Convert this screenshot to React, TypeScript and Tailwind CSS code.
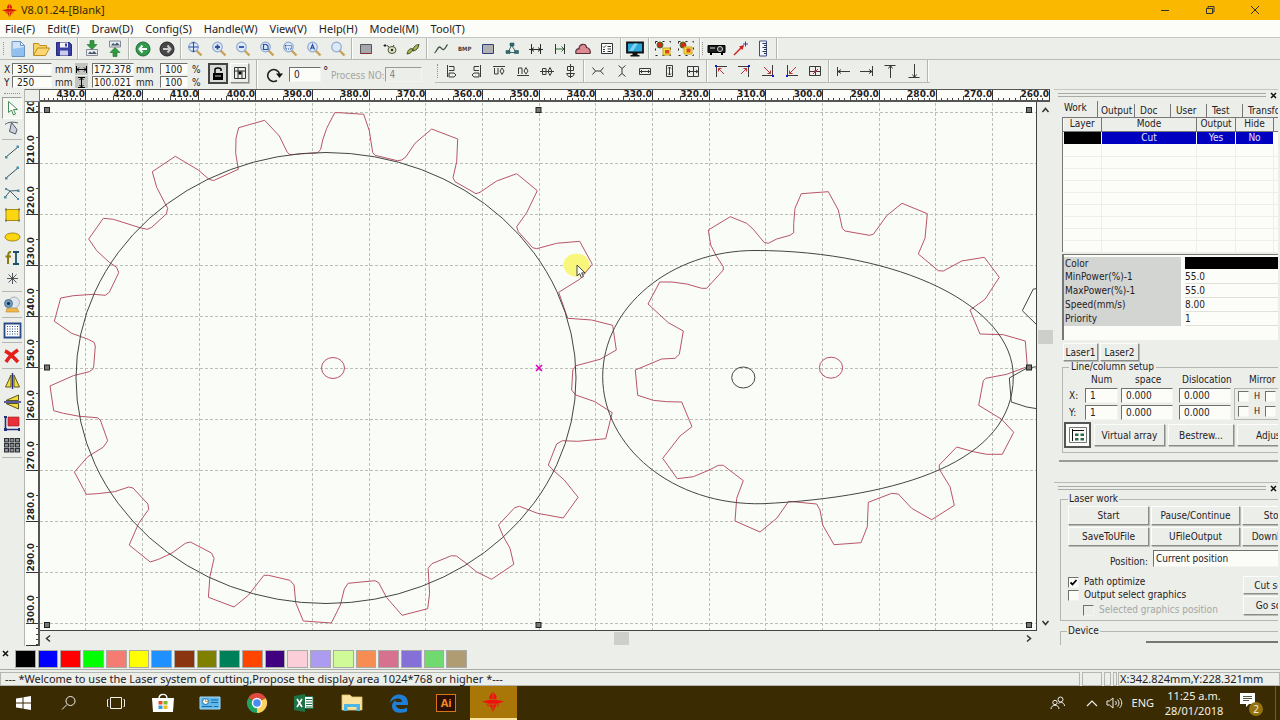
import React, { type ReactNode } from "react";

type Pt = [number, number];

/* ---------- drawing data, in document units ---------- */

const GEAR_LARGE: Pt[] = [
  [334.7, 112.7], [326.7, 128.3], [322.7, 140], [320.7, 149.3], [317.7, 152.7], [290, 154.7], [287.3, 152.3], [279.3, 136],
  [264.7, 120.3], [238.7, 127.7], [236, 138.3], [235.7, 153.3], [238.3, 169.3], [213.3, 180.7], [208.3, 178.7], [198.3, 170],
  [175.3, 156.3], [152.3, 171.7], [156.7, 187.3], [165.3, 204], [167.7, 208.3], [166.3, 214], [151.7, 227.3], [147.3, 229.3],
  [140, 227.7], [113.3, 219.3], [103.3, 218.3], [88.7, 239], [96.7, 250.7], [109.3, 262.3], [116.7, 267.3], [118.7, 272.7],
  [109.3, 292.3], [105.3, 295.3], [93.3, 294.3], [73.3, 295.7], [60.7, 298], [54.3, 321.3], [71.7, 333.3], [88.3, 339.3],
  [94, 342.3], [95.3, 346], [93.7, 366.7], [92.7, 369.3], [89.3, 371.7], [73.3, 375.7], [50, 386], [53.7, 410.7], [63.3, 413.3],
  [79.3, 416.3], [97.3, 417.7], [100.3, 420], [107.7, 440.7], [103.1, 447.3], [87.8, 456.7], [74.4, 472], [86.3, 494.3],
  [97.4, 493.7], [114.6, 491.7], [128.8, 487], [133, 488], [147.9, 504], [148.7, 509.3], [138.7, 523.3], [129.2, 545],
  [150.2, 562], [158.6, 559.3], [172, 553], [185.4, 543.3], [190.4, 542], [211.5, 553], [214.1, 558.3], [209.9, 576.7],
  [208.4, 597.3], [234, 607], [248.6, 595], [258.1, 582.7], [263.9, 575.3], [268.5, 575.3], [289.9, 580.3], [294.1, 585],
  [295.7, 602.7], [303.3, 621], [331.3, 623], [340.4, 605], [344.3, 589], [348.1, 583.3], [374.9, 580.7], [378.7, 582.7],
  [386.4, 597.3], [402.1, 615.3], [427.7, 608.7], [429.6, 593.3], [428.1, 568.3], [431.9, 563.7], [451.4, 555.7], [456.4, 556],
  [464.9, 562.3], [476.3, 571.7], [491.6, 579.3], [513.8, 564.3], [510, 548.3], [503.1, 536], [498.5, 525], [514.6, 507.7],
  [519.5, 506.3], [537.5, 513.3], [563.2, 518], [578.1, 497.3], [564.3, 480], [554, 471], [548.3, 465], [556.6, 444],
  [562.4, 440.7], [577.7, 441.3], [605.7, 438.7], [612.2, 412.7], [594.9, 401.7], [575.8, 395], [571.6, 390], [572.8, 370],
  [576, 365.7], [600, 359.3], [616.3, 350], [612.7, 325.3], [591.7, 320], [567.7, 318.3], [558.7, 292.3], [580, 279],
  [592.3, 264.3], [579.7, 241.3], [556.7, 243.3], [536.7, 248.7], [532.7, 247.7], [518.3, 231.7], [516.7, 226.7],
  [526.7, 212.7], [537.3, 190.7], [516.7, 173.7], [496.7, 181], [480, 192.3], [476, 193.7], [455, 181.7], [453, 177.7],
  [456.7, 161.7], [457.7, 139], [431.7, 129], [415, 143.3], [406, 156.7], [401.7, 160], [397.3, 160.7], [375, 155.3],
  [372.7, 152.7], [369.3, 130.7], [363.7, 114.3], [340, 112.7],
];

const GEAR_SMALL: Pt[] = [
  [801.3, 193.7], [795, 208.3], [793.7, 223.3], [793.7, 232.7], [790, 235.3], [776.7, 239], [768.3, 243.3], [764, 242.3],
  [753.3, 229.3], [746.7, 223.3], [730.3, 216.7], [708.3, 230], [710.7, 245], [716.7, 256.7], [723.3, 266.7], [723.3, 270],
  [706.7, 288.3], [701.7, 288.3], [686.7, 284], [672, 282], [659.7, 282], [648, 304], [668.3, 322.7], [683.3, 331],
  [679.3, 354.3], [675, 358.3], [661.7, 359], [635.3, 370], [637.7, 395.3], [653.3, 400.3], [666.7, 401.7], [681.7, 402],
  [692, 426.7], [680, 436], [662.7, 458.3], [677.3, 478.7], [693.3, 476.7], [710, 469.7], [718.3, 465.3], [723.3, 465.3],
  [743.3, 480.7], [736.7, 498.3], [735, 521], [760, 532], [776.7, 518.3], [788.7, 501.3], [816.7, 504], [820, 510],
  [822.7, 525], [834, 544.7], [861, 542.7], [867.3, 526.7], [868.3, 502.3], [891.7, 493.3], [898.3, 494], [911.7, 508.3],
  [931.7, 519.7], [954.3, 505.3], [950, 486.7], [939.3, 469.3], [939.3, 465], [956.7, 447], [973.3, 451.7], [986.7, 454.3],
  [1002.3, 454.3], [1013.7, 432.3], [1001.7, 419.3], [978.7, 405.3], [983.3, 380.7], [985.7, 378.3], [1006.7, 374.3],
  [1027.3, 366.7], [1025.3, 341], [1003.3, 334.7], [980, 334], [970, 310], [985, 299.3], [999.3, 277.3], [984.3, 257.3],
  [961.7, 261], [943.3, 271], [938.3, 270.7], [918.3, 254], [925, 238.3], [927.3, 213.7], [902, 203.3], [886.7, 215.7],
  [873.3, 234.3], [869.3, 235.3], [845, 231], [842.3, 228.3], [838.3, 210], [828.3, 191.7],
];

const EGG =
  "M755 250.5C900 250.5 1013.3 306 1013.3 376.7C1013.3 462 900 497 763 503.7C672 506 602.7 446 602.7 376.7C602.7 307 671 250.5 755 250.5Z";

const poly = (pts: Pt[]) => pts.map((p) => p.join(",")).join(" ");

const HANDLES: Pt[] = [[47, 110], [538.5, 110], [1029, 110], [47, 367.5], [1029, 367.5], [47, 625], [538.5, 625], [1029, 625]];

function Drawing() {
  return (
    <svg className="block h-full w-full" role="img" aria-label="Gear drawing" fill="none">
      <g transform="translate(-40 -102)">
        <g stroke="#bcbfb8" strokeDasharray="3 2">
          {Array.from({ length: 17 }, (_, i) => (
            <line key={i} x1={Math.floor(85.7 + i * 56.68) + 0.5} x2={Math.floor(85.7 + i * 56.68) + 0.5} y1="103" y2="632" />
          ))}
          {Array.from({ length: 11 }, (_, i) => (
            <line key={i} y1={Math.round(112 + i * 51.1) + 0.5} y2={Math.round(112 + i * 51.1) + 0.5} x1="40" x2="1037" />
          ))}
        </g>
        <ellipse cx="576.5" cy="265" rx="13" ry="11.5" fill="#f8f77c" />
        <g stroke="#b85567" strokeLinejoin="round">
          <polygon points={poly(GEAR_LARGE)} />
          <polygon points={poly(GEAR_SMALL)} />
          <ellipse cx="333" cy="368" rx="11.5" ry="10.5" />
          <ellipse cx="831" cy="367.7" rx="11.6" ry="10.5" />
        </g>
        <g stroke="#444644">
          <ellipse cx="326" cy="378" rx="250" ry="225.5" />
          <path d={EGG} />
          <ellipse cx="743.3" cy="377.5" rx="11.6" ry="10.5" />
          <path d="M1037 288.7L1033.3 289 1022.3 310.7 1037 325M1037 366.7L1027 368 1009.3 378 1011.3 402 1026.7 407 1037 408.7" />
        </g>
        {HANDLES.map(([x, y]) => (
          <rect key={`${x}-${y}`} x={x - 2.5} y={y - 2.5} width="5" height="5" fill="#777" stroke="#222" />
        ))}
        <path d="M536 365l6 6M542 365l-6 6" stroke="#d400c8" strokeWidth="1.6" />
        <path d="M577 265v11l2.6-2.4 1.8 4 2-.9-1.8-3.8h3.4z" fill="#fff" stroke="#444" />
      </g>
    </svg>
  );
}

/* ---------- icons ---------- */

function Svg({ w = 16, h = 16, children }: { w?: number; h?: number; children: ReactNode }) {
  return (
    <svg width={w} height={h} viewBox={`0 0 ${w} ${h}`} fill="none" stroke="#333" aria-hidden="true" className="shrink-0">
      {children}
    </svg>
  );
}

function Logo({ size, color }: { size: number; color: string }) {
  return (
    <svg width={size} height={size} viewBox="0 0 22 22" fill={color} aria-hidden="true" className="shrink-0">
      <path d="M10.600 1v7H7.500V5zM11.400 1v7h3.100V5z" />
      <path d="M0 10.500L8 8.800h6l8 1.700-6.500 2.200h-9z" />
      <path d="M7 13.500h3.600V21L9 16.800zM15 13.500h-3.600V21l1.600-4.200zM4.500 13.500h1.800l.7 2.500zM17.500 13.500h-1.800L15 16z" />
    </svg>
  );
}

const icNew = (
  <Svg w={18} h={18}>
    <path d="M3 1.500h8.500l4 4V16.500H3z" fill="#cfe4f8" stroke="#6a94c4" />
    <path d="M3.500 9l11.500-2v9H3.500z" fill="#8fc0ee" stroke="none" />
    <path d="M11.500 1.500v4h4z" fill="#fff" stroke="#6a94c4" />
  </Svg>
);
const icOpen = (
  <Svg w={18} h={18}>
    <path d="M1.500 15V3.500h5l1.500 2h6.500v3" fill="#f6d365" stroke="#c08e1c" />
    <path d="M1.500 15.500l4-7.500h12l-4 7.500z" fill="#fbd774" stroke="#c08e1c" />
  </Svg>
);
const icSave = (
  <Svg w={18} h={18}>
    <path d="M1.500 2.500h13l2 2v11h-15z" fill="#3b3fa4" stroke="#27297a" />
    <path d="M5 2.500h8v5H5z" fill="#f2f2f8" stroke="none" />
    <path d="M5 10.500h8v5H5z" fill="#c9cbe8" stroke="none" />
    <path d="M10 3.500h2v3h-2z" fill="#3b3fa4" stroke="none" />
  </Svg>
);
const picture = <><path d="M2.500 9.500h11v6h-11z" fill="#e8eef2" stroke="#889" /><path d="M4 14l2-2.500 2 1.500 2-2 3 3z" fill="#456" stroke="none" /></>;
const icImport = (
  <Svg h={17}>
    {picture}
    <path d="M6 .5h4v4h3l-5 5-5-5h3z" fill="#2f9a3f" stroke="#1d6b2a" strokeWidth=".6" />
  </Svg>
);
const icExport = (
  <Svg h={17}>
    <g transform="translate(0 -8.500)">{picture}</g>
    <path d="M6 16.500h4v-4h3l-5-5-5 5h3z" fill="#2f9a3f" stroke="#1d6b2a" strokeWidth=".6" />
  </Svg>
);
const icBack = (
  <Svg>
    <circle cx="8" cy="8" r="7" fill="#2f9a4a" stroke="#1f6a35" />
    <path d="M12 8H4.500M7.500 4.500L4.500 8l3 3.500" stroke="#fff" strokeWidth="2" />
  </Svg>
);
const icForward = (
  <Svg>
    <circle cx="8" cy="8" r="7" fill="#484848" stroke="#222" />
    <path d="M4 8h7.500M8.500 4.500l3 3.500-3 3.500" stroke="#ccc" strokeWidth="2" />
  </Svg>
);
const lens = (mark: ReactNode) => (
  <Svg>
    <path d="M9.500 9.500l5 5" stroke="#c9a255" strokeWidth="2.400" />
    <circle cx="6.500" cy="6" r="4.800" fill="#dde9f8" stroke="#8fa9cf" strokeWidth="1.200" />
    <g stroke="#2b4ea0" strokeWidth="1.200">{mark}</g>
  </Svg>
);
const icZoomFit = lens(<path d="M6.500 1v10M1.500 6h10M5 2.500L6.500 1 8 2.500M5 9.500L6.500 11 8 9.500" strokeWidth="1" />);
const icZoomIn = lens(<path d="M6.500 3.500v5M4 6h5" strokeWidth="1.800" />);
const icZoomOut = lens(<path d="M4 6h5" strokeWidth="1.800" />);
const icZoomPage = lens(<path d="M4.500 3.500h3l1.500 1.500v3.500H4.500z" />);
const icZoomSel = lens(<path d="M3.500 4.500h6v3.500h-6z" strokeDasharray="1 1" />);
const icZoomAll = lens(<path d="M4.500 8.500l2-5 2 5M5.200 7h2.600" />);
const icZoom = lens(null);

const icRect = <Svg w={14} h={12}><path d="M1.500 1.500h11v9h-11z" fill="#a6a6ac" stroke="#555" /><path d="M1.500 10.500h11" stroke="#8a2a2a" /></Svg>;
const icRectBlue = <Svg w={14} h={12}><path d="M1.500 1.500h11v9h-11z" fill="#b0b0b0" stroke="#33407c" /></Svg>;
const icPoint = (
  <Svg>
    <path d="M3 3v3M1.500 4.500h3" stroke="#222" />
    <ellipse cx="10" cy="9" rx="4" ry="3.500" fill="#dfe3c4" stroke="#4d5630" />
    <circle cx="10" cy="9" r="1.300" fill="#333" stroke="none" />
    <path d="M5 4.500l2 1.500M12 4l-1 1.500" />
  </Svg>
);
const icPen = (
  <Svg>
    <path d="M2 13c1-4.500 3-6 6-5-1 3.500-3 4.500-6 5z" fill="#a9b84a" stroke="#3b5220" />
    <path d="M8 10c0-4 2-6 6-6.500-1 4-2.500 6-6 6.500z" fill="#a9b84a" stroke="#3b4a20" />
  </Svg>
);
const icCurve = <Svg><path d="M1.500 12c2-1 3-6 5-6s2 3 4 2.500S13 5 14.500 3.500" stroke="#3d4f44" strokeWidth="1.300" /></Svg>;
const icNodes = (
  <Svg>
    <path d="M8 3.500L4 11.500h8M8 5l4 6" stroke="#3f6b6b" />
    <path d="M6 2h4v3H6zM2 9.500h4v3H2zM10.500 9.500h4v3h-4z" fill="#2f6c73" stroke="#1c4a50" strokeWidth=".5" />
  </Svg>
);
const icHGap = <Svg><path d="M3.500 3v10M12.500 3v10M1 8.500h14M6 6.500l-2.500 2L6 10.500M10 6.500l2.500 2-2.500 2" stroke="#2a2a2a" /></Svg>;
const icHGap2 = <Svg><path d="M3.500 3v10M12.500 3v10" /><path d="M4 8h8M9.500 5.500L12 8l-2.500 2.500" stroke="#2c6a34" /></Svg>;
const icCloud = <Svg w={18}><path d="M2 12.500c-1-3 1-5 3-4.500 0-5.500 7-6.500 7.500-1.500 3 0 4.500 4 3.500 6z" fill="#dd8a92" stroke="#5b2e33" strokeWidth="1.200" /></Svg>;
const icList = <Svg w={14} h={13}><path d="M1.500 1.500h11v10h-11z" fill="#fff" /><path d="M3 4.500l1 1 2-2M3 7.500h2M3 9.500h2M7.500 4.500H11M7.500 7H11M7.500 9.500H11" /></Svg>;
const icMonitor = (
  <Svg w={18}>
    <path d="M1 1.500h16v10H1z" fill="#2aa7dc" stroke="#111" strokeWidth="1.800" />
    <path d="M3 10L8 2.500h4L7 10z" fill="#7fd1f0" stroke="none" />
    <path d="M6.500 12h5v2h2v1.500h-9V14h2z" fill="#111" stroke="none" />
  </Svg>
);
const group = (tight: boolean) => (
  <Svg w={18} h={17}>
    <path d="M1.500 1.500h15v14h-15z" stroke="#222" strokeDasharray="2 5" />
    <circle cx="6" cy="5" r="3" fill="#d02a1c" stroke="#3f6e22" />
    <path d={tight ? "M7 7h8v7H7z" : "M9 8h7v7H9z"} fill="#f7e23a" stroke="#caa41c" />
    <path d={tight ? "M9.500 8.500h4v4h-4z" : "M11 10h4v3.500h-4z"} fill="#d9442a" stroke="none" />
  </Svg>
);
const icCamera = (
  <Svg w={19} h={12}>
    <path d="M1 2.500h17v7H1z" fill="#1b1b1b" stroke="#000" />
    <circle cx="13" cy="6" r="2.500" stroke="#ddd" fill="#333" />
    <path d="M3 5h5" stroke="#ddd" />
    <path d="M3 11h2M14 11h2" strokeWidth="2" stroke="#000" />
  </Svg>
);
const icArrowRed = (
  <Svg>
    <path d="M2 14L11 5" stroke="#d01e1e" strokeWidth="1.500" />
    <path d="M7 5.500l5-1.500-1.500 5z" fill="#d01e1e" stroke="none" />
    <path d="M13.500 .5v5M11 3h5" stroke="#3a3a9a" />
  </Svg>
);
const icRuler = <Svg w={10} h={17}><path d="M1.500 1h7v15h-7z" fill="#f4f6ff" stroke="#3c4e88" /><path d="M4.500 3.500h4M6 5.500h2.500M4.500 7.500h4M6 9.500h2.500M4.500 11.500h4M6 13.500h2.500" /></Svg>;

const line = (d: string, extra?: ReactNode) => <Svg w={14} h={14}><path d={d} stroke="#3a3a3a" />{extra}</Svg>;
const ALIGN_A = [
  line("M2.500 1v12M4 2.500h5v4H4M4 9h5l2 2-2 2H4z"),
  line("M11.500 1v12M10 2.500H5v4h5M10 9H5l-2 2 2 2h5z"),
  line("M1 2.500h12M2.500 4v6h3.500V4M10 4l-2 3 2 3.500L12 7z"),
  line("M1 11.500h12M2.500 10V4h3.500v6M10 10L8 7l2-3.500L12 7z"),
  line("M0 7.500h14M2.500 4.500v6h3.500v-6zM10 3.500l-2 4 2 4 2-4z"),
  line("M7.500 0v14M4.500 2.500h6v4h-6zM3.500 9.500h8l-2 3h-4z"),
];
const ALIGN_B = [
  line("M1.500 3.500l3 3.500-3 3.500M12.500 3.500l-3 3.500 3 3.500M4.500 7h5"),
  line("M3.500 1.500L7 4.500l3.500-3M3.500 12.500L7 9.500l3.500 3M7 4.500v5"),
  line("M1.500 4.500h11v6h-11zM1.500 7.500h11M4 6l-1.500 1.500L4 9M10 6l1.500 1.500L10 9"),
  line("M4.500 1.500h6v11h-6zM7.500 3v8M6 4.500L7.500 3 9 4.500M6 9.500L7.500 11 9 9.500"),
  line("M1.500 2.500h11v10h-11zM1.500 7.500h11M7.500 2.500v10M4 6L2.500 7.500 4 9M10 6l2 1.500-2 1.500"),
];
const redMark = (d: string, x: number, y: number) => (
  <>
    <path d={d} stroke="#c2303c" />
    <path d={`M${x} ${y}h2v2h-2z`} fill="#1a1ac8" stroke="none" />
  </>
);
const ALIGN_C = [
  line("M2.500 13V2.500H13", redMark("M10 10L4.500 4.500M4.500 7.500v-3h3", 1, 1)),
  line("M11.500 13V2.500H1", redMark("M4 10l5.500-5.500M6.500 4.500h3v3", 11, 1)),
  line("M11.500 1v10.500H1", redMark("M3 3l6.500 6.500M9.500 6.500v3h-3", 11, 11)),
  line("M2.500 1v10.500H13", redMark("M11 3L4.500 9.500M4.500 6.500v3h3", 1, 11)),
  line("M1.500 2.500h11v9h-11zM7.500 2.500v9M1.500 7.500h11", <path d="M5 10l5-5M6 7h3" stroke="#c2303c" />),
];
const ALIGN_D = [
  line("M1.500 3v9M2 7.500h12M5 5.500l-3 2 3 2"),
  line("M12.500 2v10M0 7.500h12M9 5.500l3 2-3 2"),
  line("M1.500 1.500h11M7.500 2v12M5.500 4.500l2-3 2 3"),
  line("M1.500 13.500h11M7.500 0v13M5.500 10.500l2 3 2-3"),
];

const icSelect = <Svg w={14}><path d="M3.500 1.500v11l3-2.500 2 5 2-1-2-4.500h4z" fill="#fff" stroke="#4a8a5a" /></Svg>;
const icNodeEdit = <Svg><path d="M1 4.500C4 2 9 1.500 14 3" stroke="#4d5868" /><path d="M7.500 2.500l5.500 7-1.500 4.500-6-2.500z" fill="#ccd2dc" stroke="#4d5868" /></Svg>;
const icLine = <Svg><path d="M2 13L14 3" stroke="#34505e" /><path d="M1 12h2.500v2.500H1zM12.500 1.500H15V4h-2.500z" fill="#4d8fa6" stroke="none" /></Svg>;
const icPolyline = (
  <Svg>
    <path d="M1 11.500L6 5l8 8M2 3l4 2 8-.5" stroke="#44606c" />
    <path d="M0 10h2.500v2.500H0zM1 2h2v2H1zM13 3.500h2.500V6H13zM13 12h2v2h-2z" fill="#4d8fa6" stroke="none" />
  </Svg>
);
const icRectangle = <Svg w={17}><path d="M2 2.500h13v11H2z" fill="#fbd611" stroke="#a88a12" /><path d="M1 1.500h2v2H1zM14 1.500h2v2h-2zM1 12.500h2v2H1zM14 12.500h2v2h-2z" fill="#7d7a3c" stroke="none" /></Svg>;
const icEllipse = <Svg w={17}><ellipse cx="8.500" cy="8" rx="7.500" ry="4" fill="#fbd611" stroke="#a88a12" /></Svg>;
const icText = <Svg w={17}><path d="M7 2C4 1.500 4 4 4 14M1.500 6.500H7" stroke="#8c7a10" strokeWidth="2" /><path d="M9 2h6M9 14h6M12 2v12" stroke="#1c4f6e" strokeWidth="1.800" /></Svg>;
const icStar = <Svg w={14}><path d="M7.500 2v11M2 7.500h11M3.500 3.500l8 8M11.500 3.500l-8 8" stroke="#50555a" /></Svg>;
const icWebcam = (
  <Svg w={19} h={17}>
    <path d="M4 12h10l2 4H3z" fill="#f0b84c" stroke="#b98628" strokeWidth=".6" />
    <circle cx="11" cy="6.500" r="5.500" fill="#dfe6ec" stroke="#9aa6b0" strokeWidth=".8" />
    <circle cx="5.500" cy="7.500" r="4" fill="#6f9cc0" stroke="#42678a" strokeWidth=".8" />
    <circle cx="5.500" cy="7.500" r="1.600" fill="#1b2b3a" stroke="none" />
  </Svg>
);
const icGrid = (
  <Svg w={19} h={17}>
    <path d="M1.500 1.500h16v14h-16z" fill="#fff" stroke="#284a86" strokeWidth="1.800" />
    <path d="M4 4.500h12M4 7h12M4 9.500h12M4 12h12" stroke="#284a86" strokeDasharray="1 1.500" />
  </Svg>
);
const icDelete = <Svg w={18}><path d="M2 3c5 2 9 7 13 11M15 2C10 5 6 9 3 14" stroke="#e2201c" strokeWidth="3.600" /></Svg>;
const icMirrorH = <Svg w={17}><path d="M7 2v12H1.500zM10 2v12h5.500z" fill="#f3dd3d" stroke="#5e5620" /><path d="M8.500 0v16" stroke="#2a2f8a" strokeWidth="1.500" /></Svg>;
const icMirrorV = <Svg w={17}><path d="M14.500 1v5.500H2zM14.500 15V9.500H2z" fill="#f3dd3d" stroke="#5e5620" /><path d="M0 8h17" stroke="#2a2f8a" strokeWidth="1.500" /></Svg>;
const icDock = (
  <Svg w={18}>
    <path d="M5 1h11v9H5z" fill="#e83038" stroke="#9a1a20" strokeWidth=".6" />
    <path d="M2.500 2v11.500H16" stroke="#26307a" strokeWidth="1.600" />
    <path d="M1 0h3v2H1zM1 12h3v3H1zM15 12h2v3h-2z" fill="#26307a" stroke="none" />
  </Svg>
);
const icArray = (
  <Svg w={18}>
    <g fill="#8b9096" stroke="#2c2f33">
      {[1.5, 7, 12.5].flatMap((x) => [1.5, 6.5, 11.5].map((y) => <rect key={`${x}${y}`} x={x} y={y} width="4" height="3.500" />))}
    </g>
  </Svg>
);

/* ---------- small building blocks ---------- */

const RAISED = "border border-t-[#fdfdfb] border-l-[#fdfdfb] border-r-[#8b8d89] border-b-[#8b8d89] bg-[#eceeea] shadow-[1px_1px_0_#b9bbb7]";
const SUNKEN = "border border-t-[#6f716d] border-l-[#6f716d] border-r-[#f4f5f2] border-b-[#f4f5f2] bg-[#fcfdf9]";

function Tool({ label, children, pressed }: { label: string; children: ReactNode; pressed?: boolean }) {
  return (
    <button
      type="button"
      aria-label={label}
      className={"flex min-h-0 min-w-0 flex-1 items-center justify-center " + (pressed ? "border border-t-[#9a9c98] border-l-[#9a9c98] border-r-white border-b-white bg-[#f5f7f3]" : "")}
    >
      {children}
    </button>
  );
}

const VSep = () => <div className="mx-px w-0.5 shrink-0 border-l border-[#b4b6b2] bg-[#fdfdfb]" />;
const HSep = () => <div className="my-px h-px shrink-0 bg-[#b4b6b2]" />;
const VGrip = () => <div className="my-1 w-0 shrink-0 border-l border-dotted border-[#8f918d]" />;

function Field({ label, value, className, tight }: { label: string; value: string; className: string; tight?: boolean }) {
  return (
    <input
      aria-label={label}
      defaultValue={value}
      className={`${SUNKEN} min-w-0 text-[10px] leading-none outline-none ${tight ? "pl-px" : "pl-1"} ${className}`}
    />
  );
}

function Check({ label, checked, disabled, id, hideLabel }: { label: string; checked?: boolean; disabled?: boolean; id: string; hideLabel?: boolean }) {
  return (
    <span className="flex items-center">
      <span className="relative flex h-[11px] w-[11px] shrink-0">
        <input
          id={id}
          type="checkbox"
          defaultChecked={checked}
          disabled={disabled}
          aria-label={label}
          className={`${SUNKEN} h-[11px] w-[11px] appearance-none disabled:bg-[#eceeea]`}
        />
        {checked && (
          <svg viewBox="0 0 11 11" className="pointer-events-none absolute inset-0" fill="none" stroke="#000" strokeWidth="1.800">
            <path d="M2.500 5.500l2 2 4-4.500" />
          </svg>
        )}
      </span>
      {!hideLabel && (
        <label htmlFor={id} className={"ml-[5px] whitespace-nowrap leading-[12px] " + (disabled ? "text-[#a4a6a2]" : "")}>
          {label}
        </label>
      )}
    </span>
  );
}

function PanelGrip() {
  return (
    <div className="flex h-[10px] items-center">
      <div className="ml-1 h-[4px] w-[208px] border-y border-[#a9aba7]" />
      <button type="button" aria-label="Close panel" className="ml-1 flex">
        <Svg w={7} h={7}><path d="M1 1l5 5M6 1L1 6" stroke="#111" strokeWidth="1.500" /></Svg>
      </button>
    </div>
  );
}

/* ---------- window sections ---------- */

function TitleBar() {
  return (
    <header className="flex h-[20px] shrink-0 items-center bg-[#fab800] pl-0.5 pr-[3px]">
      <Logo size={15} color="#d8160e" />
      <h1 className="ml-1 flex-1 font-['Noto_Sans',sans-serif] text-[11px] text-[#33290a]">V8.01.24-[Blank]</h1>
      <div className="flex h-full w-[135px]">
        <Tool label="Minimize"><Svg w={10} h={10}><path d="M1 5.500h8" /></Svg></Tool>
        <Tool label="Restore"><Svg w={10} h={10}><path d="M1.500 3.500h6v5h-6zM3 3V1.500h6v5.500H7.500" /></Svg></Tool>
        <Tool label="Close"><Svg w={10} h={10}><path d="M1 1l8 8M9 1L1 9" /></Svg></Tool>
      </div>
    </header>
  );
}

const MENUS = ["File(F)", "Edit(E)", "Draw(D)", "Config(S)", "Handle(W)", "View(V)", "Help(H)", "Model(M)", "Tool(T)"];

function MenuBar() {
  return (
    <nav aria-label="Menu" className="flex h-[18px] shrink-0 items-center gap-[12px] border-b border-[#c4c6c2] bg-[#fcfdf9] pl-[5px] font-['Noto_Sans',sans-serif] text-[11px]">
      {MENUS.map((m) => (
        <button key={m} type="button" className="leading-[16px]">{m}</button>
      ))}
    </nav>
  );
}

function MainToolbar() {
  return (
    <div className="flex h-[22px] shrink-0 border-b border-[#b9bbb7]">
      <div className="flex w-1.5 justify-center"><VGrip /></div>
      <div className="flex w-[70px]"><Tool label="New">{icNew}</Tool><Tool label="Open">{icOpen}</Tool><Tool label="Save">{icSave}</Tool></div>
      <VSep />
      <div className="flex w-[47px]"><Tool label="Import">{icImport}</Tool><Tool label="Export">{icExport}</Tool></div>
      <VSep />
      <div className="flex w-[48px]"><Tool label="Undo">{icBack}</Tool><Tool label="Redo">{icForward}</Tool></div>
      <VSep />
      <div className="flex w-[167px]">
        <Tool label="Pan">{icZoomFit}</Tool><Tool label="Zoom in">{icZoomIn}</Tool><Tool label="Zoom out">{icZoomOut}</Tool>
        <Tool label="Zoom page">{icZoomPage}</Tool><Tool label="Zoom selection">{icZoomSel}</Tool><Tool label="Zoom all">{icZoomAll}</Tool>
        <Tool label="Zoom window">{icZoom}</Tool>
      </div>
      <VSep />
      <div className="flex w-[71px]"><Tool label="Frame">{icRect}</Tool><Tool label="Set point">{icPoint}</Tool><Tool label="Pen">{icPen}</Tool></div>
      <VSep />
      <div className="flex w-[190px]">
        <Tool label="Smooth curve">{icCurve}</Tool>
        <Tool label="Bitmap"><span className="text-[6px] font-bold text-[#444]">BMP</span></Tool>
        <Tool label="Offset">{icRectBlue}</Tool><Tool label="Nodes">{icNodes}</Tool><Tool label="Gap">{icHGap}</Tool>
        <Tool label="Fit gap">{icHGap2}</Tool><Tool label="Weld">{icCloud}</Tool><Tool label="Check list">{icList}</Tool>
      </div>
      <VSep />
      <div className="flex w-6"><Tool label="Preview">{icMonitor}</Tool></div>
      <VSep />
      <div className="flex w-[47px]"><Tool label="Group">{group(false)}</Tool><Tool label="Ungroup">{group(true)}</Tool></div>
      <VSep />
      <VGrip />
      <div className="ml-0.5 flex w-[70px]"><Tool label="Camera">{icCamera}</Tool><Tool label="Laser pointer">{icArrowRed}</Tool><Tool label="Measure">{icRuler}</Tool></div>
      <VSep />
    </div>
  );
}

const NAMES = ["left", "right", "top", "bottom", "middle", "center"];

function PropertyBar() {
  return (
    <div className="flex h-[29px] shrink-0">
      <div className="flex w-[255px] items-start pl-[4px] pt-[3px]">
        <div className="grid w-[68px] grid-cols-[8px_40px_1fr] grid-rows-[12px_12px] items-center gap-y-px">
          <span>X</span><Field label="X position" value="350" className="h-[12px]" /><span className="pl-[3px]">mm</span>
          <span>Y</span><Field label="Y position" value="250" className="h-[12px]" /><span className="pl-[3px]">mm</span>
        </div>
        <div className="ml-[3px] grid w-[78px] grid-cols-[13px_46px_1fr] grid-rows-[12px_12px] items-center gap-y-px">
          <span className="flex h-[12px] items-center justify-center bg-[#c3c5c1]"><Svg w={11} h={9}><path d="M.5 1v7M10.500 1v7M1 4.500h9M3 2.500l-2 2 2 2M8 2.500l2 2-2 2" stroke="#000" /></Svg></span>
          <Field tight label="Width" value="172.378" className="ml-[4px] h-[12px]" /><span className="pl-0.5">mm</span>
          <span className="flex h-[12px] items-center justify-center bg-[#c3c5c1]"><Svg w={9} h={11}><path d="M1 .5h7M1 10.500h7M4.500 1v9M2.500 3l2-2 2 2M2.500 8l2 2 2-2" stroke="#000" /></Svg></span>
          <Field tight label="Height" value="100.021" className="ml-[4px] h-[12px]" /><span className="pl-0.5">mm</span>
        </div>
        <div className="ml-[7px] grid w-[44px] grid-cols-[28px_1fr] grid-rows-[12px_12px] items-center gap-y-px">
          <Field label="Scale X" value="100" className="h-[12px]" /><span className="pl-1">%</span>
          <Field label="Scale Y" value="100" className="h-[12px]" /><span className="pl-1">%</span>
        </div>
        <button type="button" aria-label="Lock ratio" className="ml-1 flex h-[21px] w-[20px] items-center justify-center border-2 border-[#444] bg-[#d8dad6]">
          <Svg w={14} h={15}><path d="M4 7V3.500C4 1.500 10 1.500 10 3.500V5" stroke="#000" strokeWidth="1.500" /><path d="M2 7h10v7H2z" fill="#000" stroke="none" /><path d="M4 10h6" stroke="#ccc" /></Svg>
        </button>
        <button type="button" aria-label="Reference point" className={`${RAISED} ml-0.5 flex h-[20px] w-[19px] items-center justify-center`}>
          <Svg w={14} h={14}><path d="M1.500 1.500h11v11h-11zM1.500 5h11M5 1.500v11M9 5v7.500" stroke="#333" /><path d="M5.500 5.500h3v3h-3z" fill="#000" stroke="none" /></Svg>
        </button>
      </div>
      <VSep />
      <div className="flex w-[176px] items-center pl-[6px]">
        <Svg w={18} h={18}><path d="M12 14.500A6 6 0 1 1 14.500 8" stroke="#222" strokeWidth="1.600" /><path d="M11 7.500h7L14.500 12z" fill="#111" stroke="none" /></Svg>
        <Field label="Rotation" value="0" className="ml-[6px] h-[15px] w-[32px]" />
        <span className="ml-0.5 w-[8px] self-start text-[12px] leading-[22px]">°</span>
        <label htmlFor="process-no" className="whitespace-nowrap pt-[3px] text-[10px] leading-[12px] text-[#a4a6a2]">Process NO:</label>
        <input id="process-no" disabled defaultValue="4" className="h-[15px] w-[37px] min-w-0 border border-b-[#f4f5f2] border-l-[#9a9c98] border-r-[#f4f5f2] border-t-[#9a9c98] bg-[#eceeea] pl-1 text-[10px] leading-none text-[#85878a]" />
      </div>
      <div className="flex h-[23px] border-b border-[#b9bbb7] pl-0.5">
        <VGrip />
        <div className="ml-0.5 flex w-[142px]">{ALIGN_A.map((ic, i) => <Tool key={i} label={`Align ${NAMES[i]}`}>{ic}</Tool>)}</div>
        <VSep />
        <div className="flex w-[119px]">{ALIGN_B.map((ic, i) => <Tool key={i} label={`Distribute ${i + 1}`}>{ic}</Tool>)}</div>
        <VSep />
        <div className="flex w-[118px]">{ALIGN_C.map((ic, i) => <Tool key={i} label={`Page corner ${i + 1}`}>{ic}</Tool>)}</div>
        <VSep />
        <div className="flex w-[95px]">{ALIGN_D.map((ic, i) => <Tool key={i} label={`Page side ${i + 1}`}>{ic}</Tool>)}</div>
        <VSep />
      </div>
    </div>
  );
}

function SideToolbar() {
  return (
    <div className="flex w-[25px] shrink-0 flex-col border-r border-[#b4b6b2] px-0.5">
      <div className="mx-0.5 mb-[3px] mt-1 h-0 border-t border-dotted border-[#8f918d]" />
      <div className="flex h-[41px] flex-col"><Tool label="Select" pressed>{icSelect}</Tool><Tool label="Edit nodes">{icNodeEdit}</Tool></div>
      <HSep />
      <div className="flex h-[149px] flex-col">
        <Tool label="Line">{icLine}</Tool><Tool label="Polyline">{icLine}</Tool><Tool label="Bezier">{icPolyline}</Tool>
        <Tool label="Rectangle">{icRectangle}</Tool><Tool label="Ellipse">{icEllipse}</Tool><Tool label="Text">{icText}</Tool><Tool label="Point">{icStar}</Tool>
      </div>
      <HSep />
      <div className="flex h-[23px] flex-col"><Tool label="Capture">{icWebcam}</Tool></div>
      <HSep />
      <div className="flex h-[22px] flex-col"><Tool label="Grid">{icGrid}</Tool></div>
      <HSep />
      <div className="flex h-[23px] flex-col"><Tool label="Delete">{icDelete}</Tool></div>
      <HSep />
      <div className="flex h-[86px] flex-col">
        <Tool label="Mirror horizontal">{icMirrorH}</Tool><Tool label="Mirror vertical">{icMirrorV}</Tool><Tool label="Dock">{icDock}</Tool><Tool label="Array">{icArray}</Tool>
      </div>
      <HSep />
    </div>
  );
}

const H_LABELS = Array.from({ length: 17 }, (_, i) => (420 - i * 10).toFixed(1));
const V_LABELS = Array.from({ length: 10 }, (_, i) => (210 + i * 10).toFixed(1));
const TICKS = Array.from({ length: 10 }, (_, i) => i);

function HCell({ label }: { label: string }) {
  return (
    <div className="flex h-[10px] flex-col border-r border-[#333]">
      <span className="h-[7px] text-right font-['DejaVu_Sans',sans-serif] text-[9px] font-bold leading-[9px]">{label}</span>
      <div className="flex h-[3px] items-end">
        {TICKS.map((t) => (
          <span key={t} className={"flex-1 border-r border-[#444] " + (t === 9 ? "h-0" : t === 4 ? "h-[4px]" : "h-[2px]")} />
        ))}
      </div>
    </div>
  );
}

function VCell({ label, ticks = TICKS }: { label: string; ticks?: number[] }) {
  return (
    <div className="flex h-full min-h-0 items-end border-b border-[#333]">
      <span className="w-[10px] shrink-0 rotate-180 whitespace-nowrap font-['DejaVu_Sans',sans-serif] text-[9px] font-bold leading-[10px] [writing-mode:vertical-rl]">{label}</span>
      <div className="flex h-full flex-1 flex-col items-end">
        {ticks.map((t) => (
          <span key={t} className={"flex-1 border-b border-[#444] " + (t === 9 ? "w-0" : t === 4 ? "w-[4px]" : "w-[2px]")} />
        ))}
      </div>
    </div>
  );
}

function Workspace() {
  return (
    <main className="grid min-w-0 flex-1 grid-cols-[15px_minmax(0,1fr)_17px] grid-rows-[13px_minmax(0,1fr)_15px]">
      <div className="border-b border-r border-t border-[#777]" />
      <div className="col-span-2 mr-1 flex border-b-2 border-t border-[#555] bg-[#fcfdf9]">
        <div className="w-[46px]"><HCell label="430.0" /></div>
        <div className="grid flex-1 grid-cols-[repeat(17,minmax(0,1fr))]">
          {H_LABELS.map((l) => <HCell key={l} label={l} />)}
        </div>
      </div>
      <div className="row-span-2 flex flex-col overflow-hidden border-r-2 border-[#555] bg-[#fcfdf9] pl-px">
        <div className="h-[11px] shrink-0"><VCell label="200.0" ticks={[0, 1]} /></div>
        <div className="grid min-h-0 flex-1 grid-rows-[repeat(10,minmax(0,1fr))]">
          {V_LABELS.map((l) => <VCell key={l} label={l} />)}
        </div>
        <div className="h-[22px] shrink-0"><VCell label="" ticks={[0, 1, 2, 3]} /></div>
      </div>
      <div className="min-h-0 border-b border-r border-[#444] bg-[#fafcf7]"><Drawing /></div>
      <div className="flex flex-col items-center">
        <button type="button" aria-label="Scroll up" className="flex h-4 items-center"><Svg w={9} h={6}><path d="M1.500 5l3-3.500 3 3.500" strokeWidth="1.500" /></Svg></button>
        <div className="flex-[212]" />
        <div className="h-[14px] w-[15px] bg-[#cdcfcb]" />
        <div className="flex-[271]" />
        <button type="button" aria-label="Scroll down" className="flex h-4 items-center"><Svg w={9} h={6}><path d="M1.500 1l3 3.500 3-3.500" strokeWidth="1.500" /></Svg></button>
      </div>
      <div className="flex items-center">
        <button type="button" aria-label="Scroll left" className="flex w-4 justify-center"><Svg w={6} h={9}><path d="M5 1.500l-3.500 3 3.500 3" strokeWidth="1.500" /></Svg></button>
        <div className="flex-[557]" />
        <div className="h-[13px] w-[15px] bg-[#cdcfcb]" />
        <div className="flex-[392]" />
        <button type="button" aria-label="Scroll right" className="flex w-4 justify-center"><Svg w={6} h={9}><path d="M1 1.500l3.500 3-3.500 3" strokeWidth="1.500" /></Svg></button>
      </div>
      <div />
    </main>
  );
}

const PARAMS = [["MinPower(%)-1", "55.0"], ["MaxPower(%)-1", "55.0"], ["Speed(mm/s)", "8.00"], ["Priority", "1"]];

function WorkPanel() {
  return (
    <section className="w-[262px]">
      <PanelGrip />
      <div role="tablist" className="ml-[9px] flex h-[17px] items-end">
        <button role="tab" aria-selected="true" type="button" className="h-[16px] w-[35px] border-r border-[#777] pb-[3px] pl-px text-left leading-[13px]">Work</button>
        {["Output", "Doc", "User", "Test", "Transform"].map((t) => (
          <button
            key={t}
            role="tab"
            aria-selected="false"
            type="button"
            className={"h-[13px] border-r border-[#777] text-left leading-[13px] " + (t === "Output" ? "w-[37px] pl-[3px]" : t === "Transform" ? "w-[60px] pl-[5px]" : "w-[36px] pl-[5px]")}
          >
            {t}
          </button>
        ))}
      </div>

      <div className="ml-[8px] h-[135px] overflow-hidden border-l border-t border-[#777] bg-[#fcfdf9]">
        <table className="w-[220px] table-fixed border-collapse">
          <colgroup><col className="w-[38px]" /><col className="w-[95px]" /><col className="w-[39px]" /><col className="w-[38px]" /><col /></colgroup>
          <thead>
            <tr className="h-[13px] bg-[#eceeea] leading-[12px]">
              {["Layer", "Mode", "Output", "Hide", ""].map((h, i) => (
                <th key={i} className="border-b border-r border-[#777] p-0 font-normal">{h}</th>
              ))}
            </tr>
          </thead>
          <tbody>
            <tr className="h-[13px] leading-[12px] text-[#e4e4ff]">
              <td className="border border-[#fcfdf9] bg-black p-0" />
              {["Cut", "Yes", "No"].map((c) => (
                <td key={c} className="border border-[#fcfdf9] bg-[#0000c0] p-0 text-center">{c}</td>
              ))}
              <td className="p-0" />
            </tr>
            {Array.from({ length: 9 }, (_, r) => (
              <tr key={r} className="h-[12px]">
                {[0, 1, 2, 3, 4].map((c) => <td key={c} className="border-b border-r border-[#eceeea] p-0" />)}
              </tr>
            ))}
          </tbody>
        </table>
      </div>

      <div className="ml-[8px] mt-[2px] h-[86px] border-l-2 border-t border-[#777] bg-[#fcfdf9] pt-px">
        <table className="w-[252px] table-fixed border-collapse">
          <colgroup><col className="w-[117px]" /><col className="w-[4px]" /><col /></colgroup>
          <tbody>
            <tr className="h-[13px]">
              <th className="bg-[#d3d5d2] p-0 pl-px text-left font-normal leading-[13px]">Color</th>
              <td className="p-0" />
              <td className="border-y border-[#fcfdf9] bg-black p-0" />
            </tr>
            {PARAMS.map(([k, v]) => (
              <tr key={k} className="h-[14px]">
                <th className="bg-[#d3d5d2] p-0 pl-px text-left font-normal leading-[13px]">{k}</th>
                <td className="p-0" />
                <td className="border-b border-[#dfe1dd] p-0 leading-[13px]">{v}</td>
              </tr>
            ))}
          </tbody>
        </table>
      </div>

      <div className="ml-[9px] mt-[3px] flex h-[18px] gap-0.5">
        <button type="button" className={`${RAISED} w-[35px]`}>Laser1</button>
        <button type="button" className={`${RAISED} w-[39px]`}>Laser2</button>
      </div>

      <fieldset className="ml-[8px] h-[92px] border border-[#b4b6b2] px-px">
        <legend className="ml-[5px] px-0.5 leading-[12px]">Line/column setup</legend>
        <div className="mt-px grid grid-cols-[21px_36px_58px_55px_60px] items-center gap-y-0.5 text-left">
          <span /><span className="pl-1.5 leading-[12px]">Num</span><span className="pl-[14px] leading-[12px]">space</span><span className="pl-[3px] leading-[12px]">Dislocation</span><span className="pl-[15px] leading-[12px]">Mirror</span>
          <span className="pl-[5px]">X:</span><Field label="X count" value="1" className="h-[15px] w-[33px]" /><Field label="X space" value="0.000" className="h-[15px] w-[52px]" /><Field label="X dislocation" value="0.000" className="h-[15px] w-[52px]" />
          <div className="row-span-2 flex h-full flex-col justify-around border border-r-0 border-[#b4b6b2] pl-[3px]">
            <div className="flex items-center gap-[5px]"><Check id="xh" label="X mirror H" hideLabel /><span className="text-[9px] leading-[11px]">H</span><Check id="xv" label="X mirror V" hideLabel /></div>
            <div className="flex items-center gap-[5px]"><Check id="yh" label="Y mirror H" hideLabel /><span className="text-[9px] leading-[11px]">H</span><Check id="yv" label="Y mirror V" hideLabel /></div>
          </div>
          <span className="pl-[5px]">Y:</span><Field label="Y count" value="1" className="h-[15px] w-[33px]" /><Field label="Y space" value="0.000" className="h-[15px] w-[52px]" /><Field label="Y dislocation" value="0.000" className="h-[15px] w-[52px]" />
        </div>
        <div className="mt-0.5 flex items-center gap-[3px]">
          <button type="button" aria-label="Array layout" className="flex h-[26px] w-[27px] items-center justify-center border-2 border-[#555] bg-[#fcfdf9]">
            <Svg w={20} h={18}><path d="M1.500 1.500h17v15h-17z" stroke="#777" /><path d="M4 4.500h12M4.500 3v12" stroke="#111" /><path d="M7 7.500h3.500v2.500H7zM12.500 7.500H16v2.500h-3.500zM7 12h3.500v2.500H7zM12.500 12H16v2.500h-3.500z" fill="#2c6a4c" stroke="none" /></Svg>
          </button>
          <button type="button" className={`${RAISED} h-[22px] w-[71px]`}>Virtual array</button>
          <button type="button" className={`${RAISED} h-[22px] w-[66px]`}>Bestrew...</button>
          <button type="button" className={`${RAISED} h-[22px] w-[66px]`}>Adjust</button>
        </div>
      </fieldset>
      <div className="ml-[5px] mt-[7px] border-t-2 border-[#9a9c98]" />
    </section>
  );
}

function LaserPanel() {
  return (
    <section className="mt-[20px] w-[262px] border-t border-[#b9bbb7]">
      <PanelGrip />
      <fieldset className="ml-[6px] h-[128px] border border-[#b4b6b2] pl-[7px]">
        <legend className="px-px leading-[12px]">Laser work</legend>
        <div className="mt-px grid grid-cols-[81px_89px_64px] gap-0.5">
          {["Start", "Pause/Continue", "Stop", "SaveToUFile", "UFileOutput", "Download"].map((b) => (
            <button key={b} type="button" className={`${RAISED} h-[19px]`}>{b}</button>
          ))}
        </div>
        <div className="mt-1 flex items-start">
          <label htmlFor="position" className="mt-[6px] w-[80px] text-right leading-[12px]">Position:</label>
          <select id="position" className={`${SUNKEN} ml-[5px] h-[17px] w-[150px] appearance-none px-0.5 leading-[13px]`}><option>Current position</option></select>
        </div>
        <div className="mt-2 flex justify-between pr-2">
          <div className="flex flex-col gap-px">
            <Check id="path-opt" label="Path optimize" checked />
            <Check id="out-sel" label="Output select graphics" />
            <div className="mt-0.5 pl-[15px]"><Check id="sel-pos" label="Selected graphics position" disabled /></div>
          </div>
          <div className="flex flex-col gap-0.5">
            <button type="button" className={`${RAISED} h-[18px] w-16`}>Cut scale</button>
            <button type="button" className={`${RAISED} h-[19px] w-16`}>Go scale</button>
          </div>
        </div>
      </fieldset>
      <fieldset className="ml-[6px] mt-1 h-[20px] overflow-hidden border border-b-0 border-[#b4b6b2]">
        <legend className="ml-[6px] px-px leading-[12px]">Device</legend>
        <div className="ml-[85px] mt-1 border-t-2 border-[#777]" />
      </fieldset>
    </section>
  );
}

const SWATCHES = [
  "bg-[#000000]", "bg-[#0000ff]", "bg-[#ff0000]", "bg-[#00ff00]", "bg-[#f47c72]", "bg-[#ffff00]", "bg-[#1e90ff]", "bg-[#8b3510]",
  "bg-[#808000]", "bg-[#008058]", "bg-[#ff4500]", "bg-[#400080]", "bg-[#fcced8]", "bg-[#ab9cf2]", "bg-[#d0fa98]", "bg-[#f78d52]",
  "bg-[#d6728f]", "bg-[#8470d6]", "bg-[#70da70]", "bg-[#b09c72]",
];

function Palette() {
  return (
    <div className="flex h-[23px] shrink-0 items-start pt-1">
      <button type="button" aria-label="Close palette" className="flex w-[15px] pl-[2px]"><Svg w={7} h={7}><path d="M1 1l5 5M6 1L1 6" stroke="#111" strokeWidth="1.500" /></Svg></button>
      <div className="flex w-[454px]">
        {SWATCHES.map((c, i) => (
          <div key={c} className="min-w-0 flex-1 pr-[2px]">
            <button type="button" aria-label={`Layer colour ${i + 1}`} className={`block h-[18px] w-full border border-[#a9aba7] ${c}`} />
          </div>
        ))}
      </div>
    </div>
  );
}

function StatusBar() {
  return (
    <div className="flex h-[17px] shrink-0 border-t border-[#a9aba7] pt-0.5 font-['Noto_Sans',sans-serif] text-[11px]">
      <p className="flex-1 border border-[#b4b6b2] pl-1 leading-[12px]">--- *Welcome to use the Laser system of cutting,Propose the display area 1024*768 or higher *---</p>
      <span className="ml-0.5 w-[20px] border border-[#b4b6b2]" />
      <span className="ml-0.5 w-[7px] border border-[#b4b6b2]" />
      <span className="ml-0.5 w-[4px] border border-[#b4b6b2]" />
      <p className="ml-px w-[162px] border border-[#b4b6b2] pl-px leading-[12px]">X:342.824mm,Y:228.321mm</p>
    </div>
  );
}

const tbStart = <Svg w={17} h={16}><path d="M1 3.500l6.500-1v5H1zM8.500 2.300L16 1v6.500H8.500zM1 8.500h6.500v5L1 12.500zM8.500 8.500H16V15l-7.500-1.200z" fill="#fff" stroke="none" /></Svg>;
const tbSearch = <Svg><circle cx="9.500" cy="6" r="4.500" stroke="#eee" /><path d="M6 9.500L1 14.500" stroke="#eee" /></Svg>;
const tbTask = <Svg w={20}><path d="M4.500 2.500h11v11h-11zM2.500 4.500h-1v7h1M17.500 4.500h1v7h-1" stroke="#eee" /></Svg>;
const tbStore = (
  <Svg w={22} h={20}>
    <path d="M7 5.500C7 0 15 0 15 5.500" stroke="#fff" strokeWidth="1.400" />
    <path d="M0 5h22l-1 14H1z" fill="#fff" stroke="none" />
    <path d="M6.500 8h4v3.500h-4z" fill="#e8512b" stroke="none" /><path d="M11.500 8h4v3.500h-4z" fill="#7cb82f" stroke="none" />
    <path d="M6.500 12.500h4V16h-4z" fill="#2f9fdc" stroke="none" /><path d="M11.500 12.500h4V16h-4z" fill="#f5b81c" stroke="none" />
  </Svg>
);
const tbCard = (
  <Svg w={22} h={14}>
    <path d="M1 1h20v12H1z" fill="#5eb8ec" stroke="#a8dcf8" />
    <circle cx="6.500" cy="5.500" r="3" fill="#fff" stroke="#1d6aa8" /><path d="M6.500 2.500v3h3" stroke="#e09a2a" />
    <path d="M12 4h7M12 6.500h7M3 10.500h10M15 10.500h4" stroke="#1d6aa8" />
  </Svg>
);
const tbChrome = (
  <Svg w={22} h={20}>
    <path d="M11 10L2.300 5A10 10 0 0 1 19.700 5z" fill="#dd4b3e" stroke="none" />
    <path d="M11 10L2.300 5A10 10 0 0 0 11 20z" fill="#1da462" stroke="none" />
    <path d="M11 10V20A10 10 0 0 0 19.700 5z" fill="#fdd15a" stroke="none" />
    <path d="M11 5h8.700" stroke="#dd4b3e" />
    <circle cx="11" cy="10" r="4.500" fill="#4b8bf4" stroke="#fff" strokeWidth="1.400" />
  </Svg>
);
const tbExcel = (
  <Svg w={20} h={18}>
    <path d="M9 2.500h10v12H9z" fill="#fff" stroke="#1f7246" /><path d="M12 5.500h6M12 8h6M12 10.500h6M12 13h6" stroke="#1f7246" />
    <path d="M0 2l11-2v18L0 16z" fill="#1f7246" stroke="none" /><path d="M3 5l5 8M8 5l-5 8" stroke="#fff" strokeWidth="1.600" />
  </Svg>
);
const tbFolder = (
  <Svg w={22} h={18}>
    <path d="M1 1h8l2 2h10v13H1z" fill="#f8e3a0" stroke="#e3c36a" strokeWidth=".8" />
    <path d="M3 17V10h16v7h-3.500v-4h-9v4z" fill="#4cb6e6" stroke="none" />
  </Svg>
);
const tbEdge = (
  <Svg w={20} h={19}>
    <path d="M1 8.500C2 3 6 .5 10.500.5c5.500 0 9 4 8.500 10.500H7c.3 4 6.500 5.500 11 2.500v4C11 20.500 3 18.500 3 12c0-3 1.800-5 4.500-6.200C6.500 6.800 6.600 7.500 6.800 8H13c0-5-8-4.500-12 .5z" fill="#1f7fd6" stroke="none" />
  </Svg>
);

const TASKS: [string, ReactNode][] = [
  ["Store", tbStore], ["Contacts", tbCard], ["Chrome", tbChrome], ["Excel", tbExcel], ["File Explorer", tbFolder], ["Edge", tbEdge],
];

function Taskbar() {
  return (
    <footer className="flex h-[34px] shrink-0 bg-[#3a2b03] font-['Noto_Sans',sans-serif] text-[11px] text-[#f4f0e4]">
      <div className="flex w-[139px]"><Tool label="Start">{tbStart}</Tool><Tool label="Search">{tbSearch}</Tool><Tool label="Task view">{tbTask}</Tool></div>
      <div className="flex w-[378px]">
        {TASKS.map(([n, ic]) => <Tool key={n} label={n}>{ic}</Tool>)}
        <Tool label="Illustrator"><span className="flex h-[18px] w-[20px] items-center justify-center border border-[#d8761c] bg-[#2a0f02] text-[11px] font-bold text-[#f08a24]">Ai</span></Tool>
        <button type="button" aria-label="Laser cutter" className="flex min-w-0 flex-1 items-center justify-center border-b-2 border-[#fbe3a0] bg-[#a87707]"><Logo size={22} color="#ee1111" /></button>
      </div>
      <div className="ml-auto flex shrink-0 items-center">
        <Svg><circle cx="10.500" cy="4.500" r="2.500" stroke="#eee" /><circle cx="5" cy="7.500" r="2.200" stroke="#eee" /><path d="M1 14c0-5 8-5 8 0M8.500 8.500c2-2 6-1 6 2.500" stroke="#eee" /></Svg>
        <span className="ml-[20px] flex"><Svg w={12} h={8}><path d="M1 7l5-5 5 5" stroke="#eee" strokeWidth="1.200" /></Svg></span>
        <span className="ml-[8px] flex"><Svg w={17} h={14}><path d="M1 5h2.500L7 2v10L3.500 9H1z" stroke="#eee" /><path d="M9.500 5c1 1 1 3 0 4M11.500 3.500c2 2 2 5 0 7M13.500 2c3 3 3 7 0 10" stroke="#eee" /></Svg></span>
        <span className="ml-[9px]">ENG</span>
        <div className="ml-[9px] w-[62px] whitespace-nowrap text-center leading-[15px]"><div>11:25 a.m.</div><div>28/01/2018</div></div>
        <div className="relative ml-[15px] mr-[14px] h-[22px] w-[21px]">
          <Svg w={16} h={16}><path d="M0 1h15v11h-6l-3 3v-3H0z" fill="#fff" stroke="none" /><path d="M3 4.500h9M3 6.500h9M3 8.500h6" stroke="#554" /></Svg>
          <span className="absolute bottom-[-2px] right-[-2px] flex h-[14px] w-[14px] items-center justify-center rounded-full bg-[#94720f] text-[10px] leading-none">2</span>
        </div>
        <div className="mr-[4px] h-full w-px bg-[#6b5d38]" />
      </div>
    </footer>
  );
}

export default function App() {
  return (
    <div className="flex h-screen flex-col overflow-hidden bg-[#eceeea] font-['DejaVu_Sans_Condensed','DejaVu_Sans',sans-serif] text-[10px] text-[#1f211e]">
      <TitleBar />
      <MenuBar />
      <MainToolbar />
      <PropertyBar />
      <div className="flex min-h-0 flex-1">
        <SideToolbar />
        <Workspace />
        <aside className="w-[226px] shrink-0 pr-0.5">
          <div className="h-full overflow-hidden border-t border-[#c4c6c2]">
            <WorkPanel />
            <LaserPanel />
          </div>
        </aside>
      </div>
      <Palette />
      <StatusBar />
      <Taskbar />
    </div>
  );
}
